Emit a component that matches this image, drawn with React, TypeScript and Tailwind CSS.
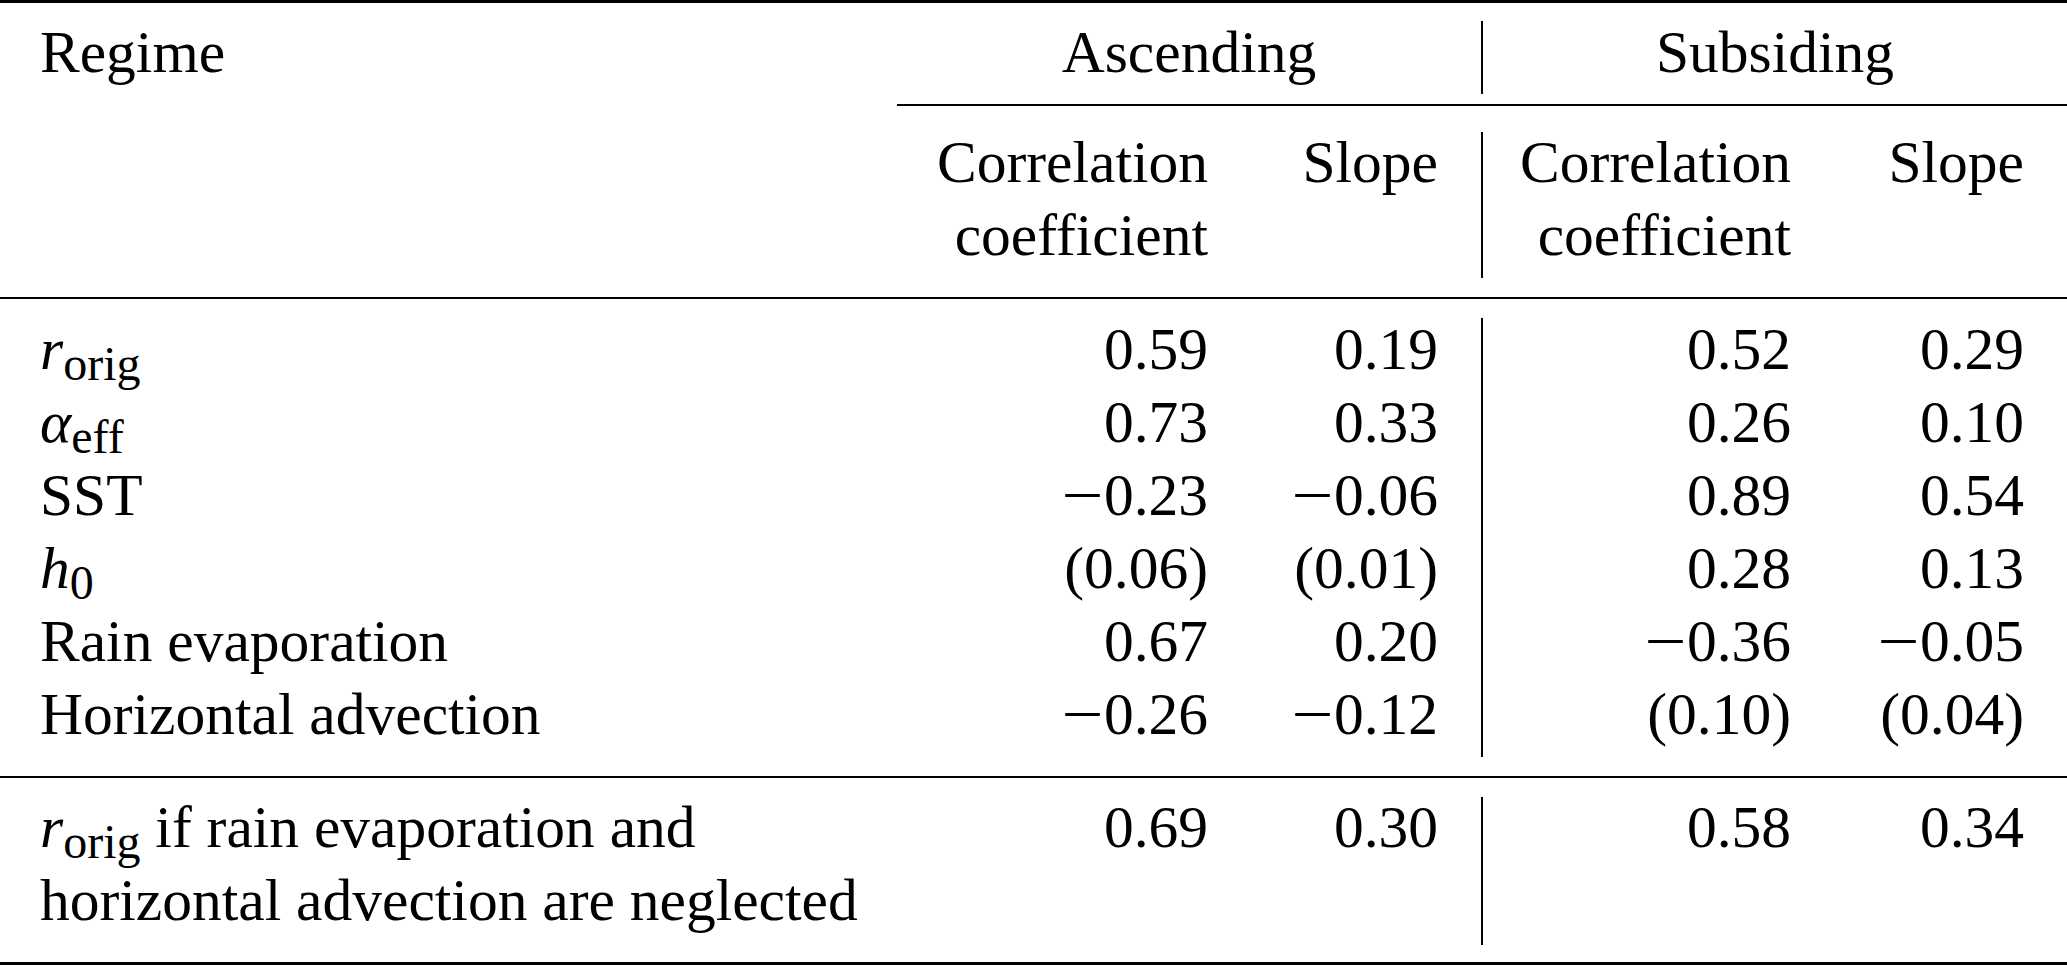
const cols = 'grid grid-cols-[897px_354px_230px_2px_351px_233px]';

type Cell = React.ReactNode;

function Sub({ children }: { children: React.ReactNode }) {
  return <span className="text-[48px] leading-[0] align-[-11px]">{children}</span>;
}

// math minus is a bit longer in the original typesetting
function Num({ v }: { v: string }) {
  if (v.startsWith('−')) {
    return (
      <>
        <span className="inline-block origin-right scale-x-125">−</span>
        {v.slice(1)}
      </>
    );
  }
  return <>{v}</>;
}

const labels: Cell[] = [
  <><i>r</i><Sub>orig</Sub></>,
  <><i>α</i><Sub>eff</Sub></>,
  'SST',
  <><i>h</i><Sub>0</Sub></>,
  'Rain evaporation',
  'Horizontal advection',
];

const ascCorr = ['0.59', '0.73', '−0.23', '(0.06)', '0.67', '−0.26'];
const ascSlope = ['0.19', '0.33', '−0.06', '(0.01)', '0.20', '−0.12'];
const subCorr = ['0.52', '0.26', '0.89', '0.28', '−0.36', '(0.10)'];
const subSlope = ['0.29', '0.10', '0.54', '0.13', '−0.05', '(0.04)'];

function Lines({ items }: { items: Cell[] }) {
  return (
    <>
      {items.map((v, i) => (
        <div key={i} className="h-[73px] whitespace-nowrap">
          {typeof v === 'string' ? <Num v={v} /> : v}
        </div>
      ))}
    </>
  );
}

export default function App() {
  return (
    <div className="w-[2067px] h-[967px] bg-white text-black font-['Liberation_Serif',serif] text-[59.5px] leading-[73px]">
      <div className="h-[3px] bg-black" />

      {/* group header */}
      <div className={`${cols} grid-rows-[101px]`}>
        <div className="pl-[40px] pt-[13px]">Regime</div>
        <div className="col-span-2 pt-[13px] text-center">Ascending</div>
        <div className="mt-[18px] mb-[10px] bg-black" />
        <div className="col-span-2 pt-[13px] text-center">Subsiding</div>
      </div>
      <div className={cols}>
        <div className="col-start-2 col-span-5 h-[2px] bg-black" />
      </div>

      {/* sub header */}
      <div className={`${cols} grid-rows-[191px]`}>
        <div />
        <div className="pt-[20px] pr-[43px] text-right">
          Correlation
          <br />
          coefficient
        </div>
        <div className="pt-[20px] pr-[43px] text-right">Slope</div>
        <div className="mt-[26px] mb-[19px] bg-black" />
        <div className="pt-[20px] pr-[43px] text-right">
          Correlation
          <br />
          coefficient
        </div>
        <div className="pt-[20px] pr-[43px] text-right">Slope</div>
      </div>
      <div className="h-[2px] bg-black" />

      {/* body */}
      <div className={`${cols} grid-rows-[477px]`}>
        <div className="pl-[40px] pt-[14px]">
          <Lines items={labels} />
        </div>
        <div className="pt-[14px] pr-[43px] text-right">
          <Lines items={ascCorr} />
        </div>
        <div className="pt-[14px] pr-[43px] text-right">
          <Lines items={ascSlope} />
        </div>
        <div className="mt-[19px] mb-[19px] bg-black" />
        <div className="pt-[14px] pr-[43px] text-right">
          <Lines items={subCorr} />
        </div>
        <div className="pt-[14px] pr-[43px] text-right">
          <Lines items={subSlope} />
        </div>
      </div>
      <div className="h-[2px] bg-black" />

      {/* neglected row */}
      <div className={`${cols} grid-rows-[184px]`}>
        <div className="pl-[40px] pt-[13px] whitespace-nowrap">
          <i>r</i>
          <Sub>orig</Sub> if rain evaporation and
          <br />
          horizontal advection are neglected
        </div>
        <div className="pt-[13px] pr-[43px] text-right">0.69</div>
        <div className="pt-[13px] pr-[43px] text-right">0.30</div>
        <div className="mt-[19px] mb-[17px] bg-black" />
        <div className="pt-[13px] pr-[43px] text-right">0.58</div>
        <div className="pt-[13px] pr-[43px] text-right">0.34</div>
      </div>
      <div className="h-[3px] bg-black" />
    </div>
  );
}
